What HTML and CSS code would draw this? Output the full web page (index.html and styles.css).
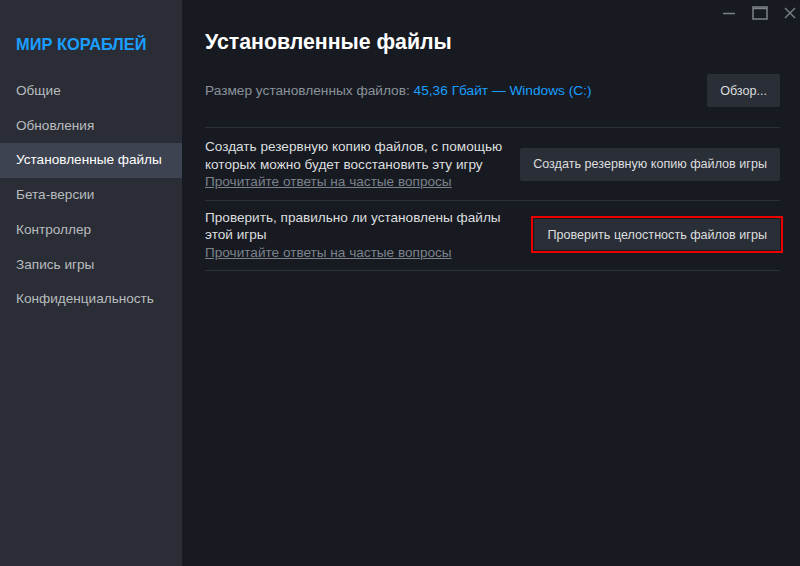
FILE: index.html
```html
<!DOCTYPE html>
<html lang="ru">
<head>
    <meta charset="UTF-8">
    <meta name="viewport" content="width=device-width, initial-scale=1.0">
    <title>Свойства — Мир кораблей</title>
    <link rel="stylesheet" href="styles.css">
</head>
<body>
    <div class="window">
        <aside class="sidebar">
            <div class="game-title">МИР КОРАБЛЕЙ</div>
            <nav class="nav">
                <a href="#" class="nav-item">Общие</a>
                <a href="#" class="nav-item">Обновления</a>
                <a href="#" class="nav-item active">Установленные файлы</a>
                <a href="#" class="nav-item">Бета-версии</a>
                <a href="#" class="nav-item">Контроллер</a>
                <a href="#" class="nav-item">Запись игры</a>
                <a href="#" class="nav-item">Конфиденциальность</a>
            </nav>
        </aside>

        <main class="content">
            <h1 class="page-title">Установленные файлы</h1>

            <div class="section size-row">
                <div class="size-text">
                    Размер установленных файлов: <span class="accent">45,36 Гбайт — Windows (C:)</span>
                </div>
                <button class="btn">Обзор...</button>
            </div>

            <div class="section">
                <div class="desc">
                    <div>Создать резервную копию файлов, с помощью которых можно будет восстановить эту игру</div>
                    <a href="#" class="faq-link">Прочитайте ответы на частые вопросы</a>
                </div>
                <button class="btn">Создать резервную копию файлов игры</button>
            </div>

            <div class="section">
                <div class="desc">
                    <div>Проверить, правильно ли установлены файлы этой игры</div>
                    <a href="#" class="faq-link">Прочитайте ответы на частые вопросы</a>
                </div>
                <button class="btn highlighted">Проверить целостность файлов игры</button>
            </div>
        </main>

        <div class="window-controls">
            <svg width="14" height="14" viewBox="0 0 14 14"><line x1="1" y1="7.5" x2="13" y2="7.5" stroke="#7b828c" stroke-width="1.5"/></svg>
            <svg width="16" height="14" viewBox="0 0 16 14"><rect x="1" y="1" width="14" height="12" fill="none" stroke="#7b828c" stroke-width="1.5"/><line x1="1" y1="2.5" x2="15" y2="2.5" stroke="#7b828c" stroke-width="1.5"/></svg>
            <svg width="12" height="12" viewBox="0 0 12 12"><path d="M1 1L11 11M11 1L1 11" stroke="#7b828c" stroke-width="1.4"/></svg>
        </div>
    </div>
</body>
</html>
```

FILE: styles.css
```css
* {
    box-sizing: border-box;
    font-family: 'Liberation Sans', Arial, sans-serif;
}

body {
    margin: 0;
    padding: 0;
    background-color: #171a21;
    color: #dcdedf;
}

.window {
    position: relative;
    display: flex;
    width: 800px;
    height: 566px;
    overflow: hidden;
}

.sidebar {
    width: 182px;
    flex-shrink: 0;
    background-color: #2a2d35;
    padding-top: 35px;
}

.game-title {
    padding: 0 16px;
    font-size: 16.4px;
    line-height: 18px;
    font-weight: bold;
    color: #1a9fff;
    margin-bottom: 21px;
}

.nav {
    display: flex;
    flex-direction: column;
}

.nav-item {
    display: block;
    padding: 8px 16px;
    line-height: 18.7px;
    font-size: 13.6px;
    color: #b8bcbf;
    text-decoration: none;
    white-space: nowrap;
}

.nav-item.active {
    background-color: #3d4350;
    color: #ffffff;
}

.content {
    flex: 1;
    padding: 29px 20px 0 23px;
}

.page-title {
    margin: 0 0 19px;
    font-size: 21.3px;
    line-height: 26px;
    font-weight: bold;
    color: #ffffff;
}

.section {
    display: flex;
    justify-content: space-between;
    align-items: center;
    gap: 16px;
    padding: 10px 0 9px;
    border-bottom: 1px solid #2c3038;
}

.section:last-child {
    padding-top: 8px;
}

.size-row {
    padding: 0 0 20px;
}

.size-text {
    font-size: 13.7px;
    color: #8b929a;
}

.accent {
    color: #1a9fff;
}

.desc {
    font-size: 13.6px;
    line-height: 17.5px;
    color: #dcdedf;
    max-width: 300px;
}

.faq-link {
    color: #7b828c;
    text-decoration: underline;
}

.btn {
    height: 33px;
    padding: 0 13px;
    border: none;
    border-radius: 2px;
    background-color: #2a2e37;
    color: #dcdedf;
    font-size: 12.6px;
    white-space: nowrap;
}

.btn.highlighted {
    height: 31px;
    border-radius: 0;
    outline: 2px solid #ee0000;
    outline-offset: 1px;
}

.window-controls {
    position: absolute;
    top: 6px;
    right: 4px;
    display: flex;
    align-items: center;
    gap: 16px;
}
```
